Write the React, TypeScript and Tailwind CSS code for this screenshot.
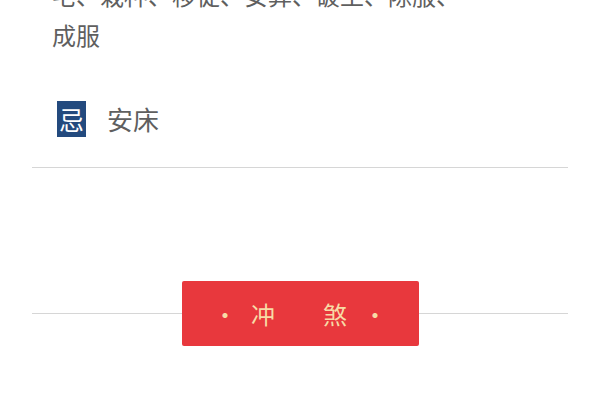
import React from "react";

export default function App() {
  return (
    <div
      className="w-[600px] h-[400px] overflow-hidden bg-white"
      style={{ fontFamily: '"Noto Sans CJK SC", "Noto Sans", sans-serif' }}
    >
      <div className="px-8">
        <div className="pl-[20px] mt-[-25px] text-[24px] leading-[40px] text-[#5f5f5f]">
          <p className="whitespace-nowrap">宅、栽种、移徙、安葬、破土、除服、</p>
          <p>成服</p>
        </div>
        <div className="pl-[25px] mt-[46px] flex items-center text-[#5f5f5f]">
          <span className="w-[29px] h-[36px] bg-[#234a7e] text-white flex items-center justify-center text-[25px] leading-none">
            忌
          </span>
          <span className="ml-[21px] text-[26px] leading-none">安床</span>
        </div>
        <div className="mt-[30px] h-px bg-[#d6d6d6]" />
        <div className="mt-[113px] flex items-center">
          <div className="flex-1 h-px bg-[#d6d6d6]" />
          <div className="w-[237px] h-[65px] bg-[#e8383d] rounded-[2px] flex items-center justify-center text-[24px] leading-none text-[#f7dba6]">
            <span className="w-6 text-center">·</span>
            <span className="w-6 text-center ml-[14px]">冲</span>
            <span className="w-6 text-center ml-[48px]">煞</span>
            <span className="w-6 text-center ml-[16px]">·</span>
          </div>
          <div className="flex-1 h-px bg-[#d6d6d6]" />
        </div>
      </div>
    </div>
  );
}
